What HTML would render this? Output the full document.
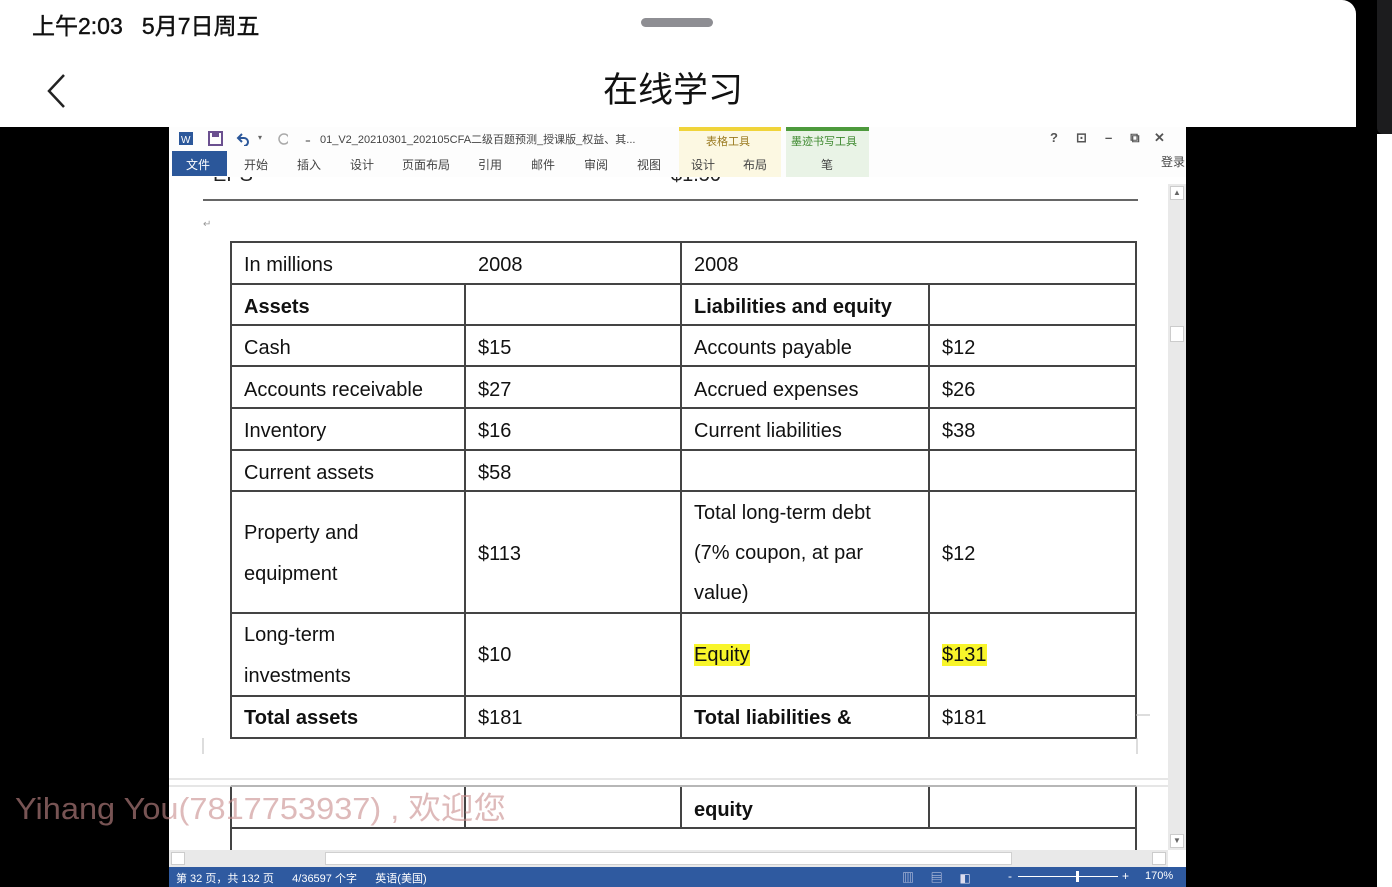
<!DOCTYPE html>
<html><head><meta charset="utf-8"><style>
*{margin:0;padding:0;box-sizing:border-box}
body{width:1392px;height:887px;background:#000;position:relative;overflow:hidden;font-family:"Liberation Sans","Noto Sans CJK SC",sans-serif}
.a{position:absolute}
.hdr{left:0;top:0;width:1356px;height:127px;background:#fff;border-top-right-radius:14px}
.t{white-space:nowrap}
.cell{position:absolute;font-size:20px;color:#111;white-space:nowrap}
.hl{background:#f8f52a}
.b{font-weight:bold}
.tab{position:absolute;top:156px;font-size:12px;color:#444}
</style></head><body>
<div class="a hdr"></div>
<div class="a" style="left:1377px;top:0;width:15px;height:134px;background:#1c1c1e;border-bottom-left-radius:6px"></div>
<div class="a" style="left:1377px;top:134px;width:15px;height:753px;background:#fff"></div>
<div class="a t" style="left:32px;top:7px;font-size:23px;color:#111;-webkit-text-stroke:0.4px #111">上午2:03&nbsp;&nbsp; 5月7日周五</div>
<div class="a" style="left:641px;top:18px;width:72px;height:9px;border-radius:5px;background:#8e8e93"></div>
<svg class="a" style="left:44px;top:72px" width="26" height="40"><path d="M20 3 L5 19 L20 35" fill="none" stroke="#222" stroke-width="2.5"/></svg>
<div class="a t" style="left:603px;top:62px;font-size:35px;color:#111">在线学习</div>

<!-- word window -->
<div class="a" style="left:169px;top:127px;width:1017px;height:760px;background:#fff"></div>
<!-- doc cut text -->
<div class="a t" style="left:213px;top:177px;height:14px;overflow:hidden;font-size:20px;color:#222"><div style="margin-top:-13px">EPS</div></div>
<div class="a t" style="left:671px;top:177px;height:14px;overflow:hidden;font-size:20px;color:#222"><div style="margin-top:-13px">$1.50</div></div>
<!-- ribbon -->
<div class="a" style="left:169px;top:127px;width:1017px;height:50px;background:#fdfdfd"></div>
<svg class="a" style="left:178px;top:130px" width="110" height="16">
<rect x="1" y="2" width="14" height="13" fill="#2b579a"/><text x="3" y="13" font-size="10" fill="#fff" font-family="Liberation Sans">W</text>
<rect x="31" y="2" width="13" height="13" fill="none" stroke="#6a4f8f" stroke-width="2"/><rect x="34" y="3" width="7" height="4" fill="#6a4f8f"/>
<path d="M64 4 l-4 4 l4 4 M60 8 h6 a4 4 0 0 1 0 8" fill="none" stroke="#2b579a" stroke-width="2"/>
<text x="80" y="10" font-size="8" fill="#666">▾</text>
<circle cx="106" cy="9" r="5" fill="none" stroke="#aaa" stroke-width="1.5"/>
</svg>
<div class="a t" style="left:305px;top:131px;font-size:11px;color:#444">₌&nbsp;&nbsp; 01_V2_20210301_202105CFA二级百题预测_授课版_权益、其...</div>
<div class="a" style="left:679px;top:127px;width:102px;height:50px;background:#fcf8e2;border-top:4px solid #f0d43a"></div>
<div class="a t" style="left:706px;top:133px;font-size:11px;color:#9a7a20">表格工具</div>
<div class="a" style="left:786px;top:127px;width:83px;height:50px;background:#e9f3e6;border-top:4px solid #4d9a3c"></div>
<div class="a t" style="left:791px;top:133px;font-size:11px;color:#3f8a30">墨迹书写工具</div>
<div class="a" style="left:172px;top:151px;width:55px;height:25px;background:#2b579a"></div>
<div class="tab" style="left:186px;color:#fff">文件</div>
<div class="tab" style="left:244px">开始</div><div class="tab" style="left:297px">插入</div><div class="tab" style="left:350px">设计</div><div class="tab" style="left:402px">页面布局</div><div class="tab" style="left:478px">引用</div><div class="tab" style="left:531px">邮件</div><div class="tab" style="left:584px">审阅</div><div class="tab" style="left:637px">视图</div><div class="tab" style="left:691px">设计</div><div class="tab" style="left:743px">布局</div><div class="tab" style="left:821px">笔</div>
<div class="a t" style="left:1050px;top:130px;font-size:13px;color:#555;font-weight:bold">?&nbsp;&nbsp;&nbsp;&nbsp; ⊡&nbsp;&nbsp;&nbsp;&nbsp; –&nbsp;&nbsp;&nbsp;&nbsp; ⧉&nbsp;&nbsp;&nbsp; ✕</div>
<div class="tab" style="left:1161px;top:153px">登录</div>

<div class="a" style="left:203px;top:199px;width:935px;height:2px;background:#666"></div>
<div class="a t" style="left:203px;top:219px;font-size:10px;color:#999">↵</div>
<!-- scrollbar -->
<div class="a" style="left:1168px;top:184px;width:18px;height:666px;background:#e9e9e9"></div>
<div class="a" style="left:1170px;top:186px;width:14px;height:14px;background:#fff;border:1px solid #ccc;font-size:8px;color:#666;text-align:center;line-height:12px">▲</div>
<div class="a" style="left:1170px;top:326px;width:14px;height:16px;background:#fff;border:1px solid #ccc"></div>
<div class="a" style="left:1170px;top:834px;width:14px;height:14px;background:#fff;border:1px solid #ccc;font-size:8px;color:#666;text-align:center;line-height:12px">▼</div>

<svg class="a" style="left:0;top:0" width="1392" height="887">
<g stroke="#444" stroke-width="2" fill="none">
<rect x="231" y="242" width="905" height="496"/>
<path d="M231 284H1136M231 325H1136M231 366H1136M231 408H1136M231 450H1136M231 491H1136M231 613H1136M231 696H1136"/>
<path d="M465 284V738M681 242V738M929 284V738"/>
<path d="M231 786H1136M231 828H1136M231 786V850M465 786V828M681 786V828M929 786V828M1136 786V850"/>
</g>
<path d="M169 779H1168M169 786H1168" stroke="#ddd" stroke-width="1.5"/>
<path d="M203 738V754M1136 715H1150M1137 738V754" stroke="#bbb"/>
</svg>
<div class="cell" style="left:244px;top:254px">In millions</div>
<div class="cell" style="left:478px;top:254px">2008</div>
<div class="cell" style="left:694px;top:254px">2008</div>
<div class="cell b" style="left:244px;top:296px">Assets</div>
<div class="cell b" style="left:694px;top:296px">Liabilities and equity</div>
<div class="cell" style="left:244px;top:337px">Cash</div><div class="cell" style="left:478px;top:337px">$15</div><div class="cell" style="left:694px;top:337px">Accounts payable</div><div class="cell" style="left:942px;top:337px">$12</div>
<div class="cell" style="left:244px;top:379px">Accounts receivable</div><div class="cell" style="left:478px;top:379px">$27</div><div class="cell" style="left:694px;top:379px">Accrued expenses</div><div class="cell" style="left:942px;top:379px">$26</div>
<div class="cell" style="left:244px;top:420px">Inventory</div><div class="cell" style="left:478px;top:420px">$16</div><div class="cell" style="left:694px;top:420px">Current liabilities</div><div class="cell" style="left:942px;top:420px">$38</div>
<div class="cell" style="left:244px;top:462px">Current assets</div><div class="cell" style="left:478px;top:462px">$58</div>
<div class="cell" style="left:244px;top:513px;line-height:41px">Property and<br>equipment</div>
<div class="cell" style="left:478px;top:543px">$113</div>
<div class="cell" style="left:694px;top:493px;line-height:40px">Total long-term debt<br>(7% coupon, at par<br>value)</div>
<div class="cell" style="left:942px;top:543px">$12</div>
<div class="cell" style="left:244px;top:615px;line-height:41px">Long-term<br>investments</div>
<div class="cell" style="left:478px;top:644px">$10</div>
<div class="cell" style="left:694px;top:644px"><span class="hl">Equity</span></div>
<div class="cell" style="left:942px;top:644px"><span class="hl">$131</span></div>
<div class="cell b" style="left:244px;top:707px">Total assets</div><div class="cell" style="left:478px;top:707px">$181</div>
<div class="cell b" style="left:694px;top:707px">Total liabilities &amp;</div><div class="cell" style="left:942px;top:707px">$181</div>
<div class="cell b" style="left:694px;top:799px">equity</div>

<!-- watermark -->
<div class="a t" style="left:15px;top:783px;font-size:31px;color:rgba(200,140,140,0.6);transform:scaleX(1.05);transform-origin:left">Yihang You(7817753937) , 欢迎您</div>

<!-- h scrollbar -->
<div class="a" style="left:169px;top:850px;width:999px;height:17px;background:#e9e9e9"></div>
<div class="a" style="left:325px;top:852px;width:687px;height:13px;background:#fff;border:1px solid #d0d0d0"></div>
<div class="a" style="left:171px;top:852px;width:14px;height:13px;background:#fff;border:1px solid #ccc"></div>
<div class="a" style="left:1152px;top:852px;width:14px;height:13px;background:#fff;border:1px solid #ccc"></div>
<!-- status -->
<div class="a" style="left:169px;top:867px;width:1017px;height:20px;background:#2f5aa0"></div>
<div class="a t" style="left:176px;top:870px;font-size:11px;color:#fff">第 32 页，共 132 页&nbsp;&nbsp;&nbsp;&nbsp;&nbsp; 4/36597 个字&nbsp;&nbsp;&nbsp;&nbsp;&nbsp; 英语(美国)</div>
<div class="a t" style="left:902px;top:869px;font-size:12px;color:#dde">▥&nbsp;&nbsp;&nbsp;&nbsp; ▤&nbsp;&nbsp;&nbsp;&nbsp; ◧</div>
<div class="a" style="left:1018px;top:876px;width:100px;height:1px;background:#fff"></div>
<div class="a" style="left:1076px;top:871px;width:3px;height:11px;background:#fff"></div>
<div class="a t" style="left:1008px;top:869px;font-size:12px;color:#fff">-</div>
<div class="a t" style="left:1122px;top:869px;font-size:12px;color:#fff">+</div>
<div class="a t" style="left:1145px;top:870px;font-size:11px;color:#fff">170%</div>
</body></html>
